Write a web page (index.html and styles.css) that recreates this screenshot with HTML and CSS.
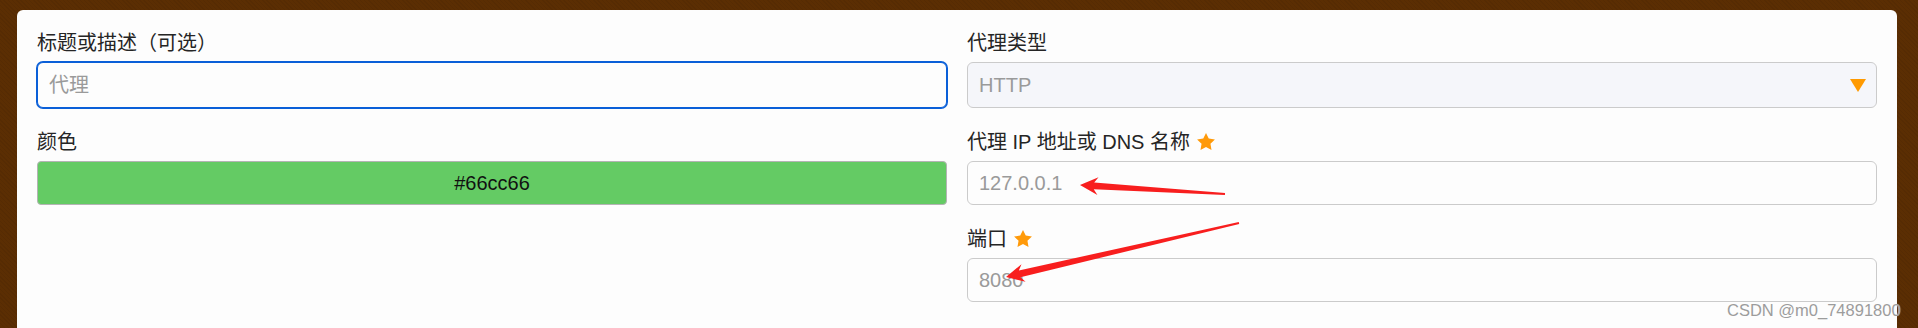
FILE: index.html
```html
<!DOCTYPE html>
<html lang="zh-CN">
<head>
<meta charset="utf-8">
<title>代理设置</title>
<link rel="stylesheet" href="styles.css">
</head>
<body>
<div class="page">
  <form class="card">
    <div class="field">
      <label class="label">标题或描述（可选）</label>
      <input class="control focused" type="text" placeholder="代理">
    </div>
    <div class="field">
      <label class="label">代理类型</label>
      <div class="control select"><span class="select-value">HTTP</span><span class="caret"></span></div>
    </div>
    <div class="field">
      <label class="label">颜色</label>
      <div class="control color-box">#66cc66</div>
    </div>
    <div class="field">
      <label class="label">代理 IP 地址或 DNS 名称 <svg class="star" viewBox="0 0 24 24"><path d="M12 1.2l3.3 6.7 7.4 1.1-5.35 5.2 1.27 7.35L12 18.1l-6.62 3.45 1.27-7.35L1.3 9l7.4-1.1z"/></svg></label>
      <input class="control" type="text" placeholder="127.0.0.1">
    </div>
    <div class="field"></div>
    <div class="field">
      <label class="label">端口 <svg class="star" viewBox="0 0 24 24"><path d="M12 1.2l3.3 6.7 7.4 1.1-5.35 5.2 1.27 7.35L12 18.1l-6.62 3.45 1.27-7.35L1.3 9l7.4-1.1z"/></svg></label>
      <input class="control" type="text" placeholder="8080">
    </div>
  </form>
</div>
<svg class="annotations" viewBox="0 0 1918 328" width="1918" height="328">
  <polygon points="1080,185 1097.4,195.1 1093.75,189.36 1224.94,195 1225.06,193 1094.19,182.38 1098.52,177.14"/>
  <polygon points="1006,277 1025.56,281.71 1020.43,277.25 1239.23,223.97 1238.77,222.03 1018.85,270.43 1021.5,264.17"/>
</svg>
<div class="watermark">CSDN @m0_74891800</div>
</body>
</html>
```
FILE: styles.css
```css
html, body {
  margin: 0;
  padding: 0;
}
body {
  width: 1918px;
  height: 328px;
  overflow: hidden;
  background-color: #5b2e03;
  background-image: repeating-linear-gradient(45deg, rgba(0,0,0,0.06) 0 1px, transparent 1px 3px);
  font-family: "Liberation Sans", "Noto Sans CJK SC", sans-serif;
  position: relative;
}
.page {
  padding: 10px 0 0 17px;
}
.card {
  box-sizing: border-box;
  width: 1880px;
  height: 318px;
  overflow: hidden;
  padding: 21px 20px 0 20px;
  background: #fdfdfd;
  border-radius: 6px 6px 0 0;
  display: grid;
  grid-template-columns: 910px 910px;
  column-gap: 20px;
  row-gap: 22px;
  align-content: start;
}
.field {
  display: flex;
  flex-direction: column;
}
.label {
  font-size: 20px;
  line-height: 24px;
  color: #252525;
  margin-bottom: 7px;
  display: flex;
  align-items: center;
  gap: 6px;
}
.star {
  width: 20px;
  height: 20px;
  fill: #ff9a0a;
}
.control {
  box-sizing: border-box;
  width: 100%;
  height: 44px;
  margin: 0;
  border: 1px solid #cbcbcb;
  border-radius: 6px;
  background: #fdfdfd;
  font-family: "Liberation Sans", "Noto Sans CJK SC", sans-serif;
  font-size: 20px;
  color: #222;
  padding: 0 11px;
  outline: none;
}
.control::placeholder {
  color: #9a9a9a;
  opacity: 1;
}
.focused {
  height: 46px;
  border-color: #0a5fd8;
  box-shadow: 0 0 0 1px #0a5fd8;
  border-radius: 6px;
}
.select {
  height: 46px;
  background: #f5f6fa;
  display: flex;
  align-items: center;
  justify-content: space-between;
  padding-right: 10px;
}
.select-value {
  color: #9a9a9a;
}
.caret {
  width: 0;
  height: 0;
  border-left: 8.5px solid transparent;
  border-right: 8.5px solid transparent;
  border-top: 13px solid #ff9a00;
}
.color-box {
  background: #64cb64;
  border-color: #b4b4b4;
  border-radius: 4px;
  display: flex;
  align-items: center;
  justify-content: center;
  color: #111;
}
.annotations {
  position: absolute;
  left: 0;
  top: 0;
  pointer-events: none;
  fill: #f81e1e;
}
.watermark {
  position: absolute;
  left: 1727px;
  top: 302px;
  font-size: 16.5px;
  line-height: 16.5px;
  color: #9c9c9c;
  text-shadow: 0 0 1px #fff;
  white-space: nowrap;
}
```
